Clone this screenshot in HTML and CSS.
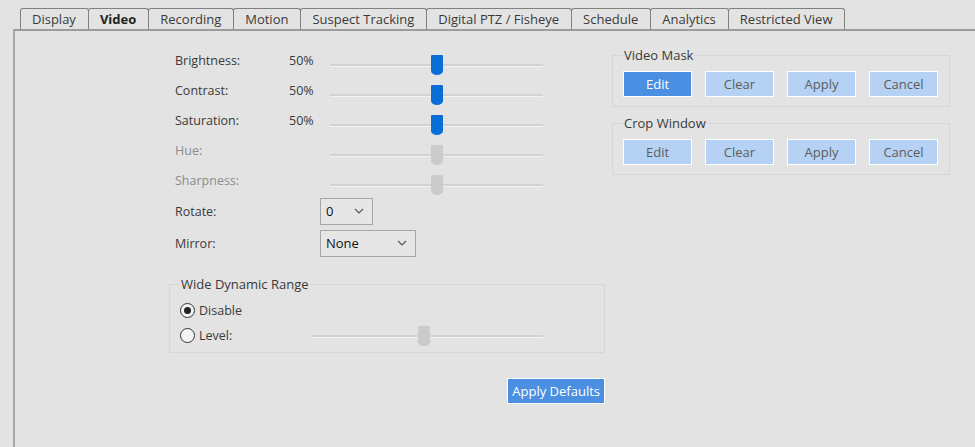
FILE: index.html
```html
<!DOCTYPE html>
<html lang="en">
<head>
    <title>Camera Settings - Video</title>
    <link rel="stylesheet" href="styles.css">
</head>
<body>
    <div class="tabs">
        <div class="tab">Display</div>
        <div class="tab active">Video</div>
        <div class="tab">Recording</div>
        <div class="tab">Motion</div>
        <div class="tab">Suspect Tracking</div>
        <div class="tab">Digital PTZ / Fisheye</div>
        <div class="tab">Schedule</div>
        <div class="tab">Analytics</div>
        <div class="tab">Restricted View</div>
    </div>

    <div class="panel">
        <div class="left">
            <div class="slider-row">
                <span>Brightness:</span>
                <span>50%</span>
                <div class="slider"><div class="thumb"></div></div>
            </div>
            <div class="slider-row">
                <span>Contrast:</span>
                <span>50%</span>
                <div class="slider"><div class="thumb"></div></div>
            </div>
            <div class="slider-row">
                <span>Saturation:</span>
                <span>50%</span>
                <div class="slider"><div class="thumb"></div></div>
            </div>
            <div class="slider-row disabled">
                <span>Hue:</span>
                <span></span>
                <div class="slider"><div class="thumb"></div></div>
            </div>
            <div class="slider-row disabled">
                <span>Sharpness:</span>
                <span></span>
                <div class="slider"><div class="thumb"></div></div>
            </div>

            <div class="select-row">
                <span>Rotate:</span>
                <div class="select select-small">
                    <span>0</span>
                    <svg width="10" height="6" viewBox="0 0 10 6"><polyline points="1,1 5,5 9,1" fill="none" stroke="#555" stroke-width="1.1"/></svg>
                </div>
            </div>
            <div class="select-row">
                <span>Mirror:</span>
                <div class="select select-wide">
                    <span>None</span>
                    <svg width="10" height="6" viewBox="0 0 10 6"><polyline points="1,1 5,5 9,1" fill="none" stroke="#555" stroke-width="1.1"/></svg>
                </div>
            </div>

            <fieldset class="group wdr">
                <legend>Wide Dynamic Range</legend>
                <div class="radio-row">
                    <span class="radio checked"></span>
                    <span>Disable</span>
                </div>
                <div class="radio-row level">
                    <div class="radio-label">
                        <span class="radio"></span>
                        <span>Level:</span>
                    </div>
                    <div class="slider off"><div class="thumb"></div></div>
                </div>
            </fieldset>

            <div class="actions">
                <button class="btn primary">Apply Defaults</button>
            </div>
        </div>

        <div class="right">
            <fieldset class="group">
                <legend>Video Mask</legend>
                <div class="btn-row">
                    <button class="btn primary">Edit</button>
                    <button class="btn">Clear</button>
                    <button class="btn">Apply</button>
                    <button class="btn">Cancel</button>
                </div>
            </fieldset>
            <fieldset class="group">
                <legend>Crop Window</legend>
                <div class="btn-row">
                    <button class="btn">Edit</button>
                    <button class="btn">Clear</button>
                    <button class="btn">Apply</button>
                    <button class="btn">Cancel</button>
                </div>
            </fieldset>
        </div>
    </div>
</body>
</html>
```

FILE: styles.css
```css
body {
    font-family: "Open Sans", "Noto Sans", sans-serif;
    font-size: 12.5px;
    color: #3a3a3a;
    background-color: #e3e3e3;
    margin: 0;
    padding: 0;
    overflow: hidden;
}

.tabs {
    display: flex;
    padding: 8px 0 0 20px;
    height: 21px;
}

.tab {
    height: 20px;
    line-height: 20px;
    font-size: 13px;
    padding: 0 12px 0 11px;
    border: 1px solid #808080;
    border-bottom: none;
    border-radius: 3px 3px 0 0;
    margin-right: -1px;
    color: #3a3a3a;
}

.tab.active {
    font-weight: bold;
    color: #222;
}

.panel {
    margin-left: 13px;
    height: 418px;
    border-top: 2px solid #9c9c9c;
    border-left: 2px solid #a8a8a8;
    display: flex;
    align-items: flex-start;
}

.left {
    width: 436px;
    margin-left: 154px;
    padding-top: 14px;
}

.slider-row {
    display: grid;
    grid-template-columns: 114px 41px 213px;
    align-items: center;
    height: 30px;
    padding-left: 6px;
}

.slider-row:last-of-type {
    height: 32px;
}

.slider-row.disabled {
    color: #8c8c8c;
}

.slider {
    position: relative;
    height: 20px;
    margin-top: 10px;
}

.slider::before {
    content: "";
    position: absolute;
    left: 0;
    right: 0;
    top: 9px;
    height: 2px;
    background: #d2d2d2;
    border-bottom: 1px solid #f2f2f2;
}

.thumb {
    position: absolute;
    left: calc(50% - 6px);
    top: 0;
    width: 12px;
    height: 20px;
    background: #0a6ed6;
    border-radius: 1px 1px 6px 6px / 1px 1px 4px 4px;
}

.disabled .thumb,
.off .thumb {
    background: #cbcbcb;
}

.off .thumb {
    left: calc(50% - 10px);
}

.select-row {
    display: flex;
    align-items: center;
    height: 32px;
    padding-left: 6px;
}

.select-row > span {
    width: 145px;
}

.select-row:first-of-type {
    margin-top: 2px;
}

.select {
    display: flex;
    align-items: center;
    justify-content: space-between;
    height: 27px;
    padding: 0 8px 0 5px;
    border: 1px solid #a6a6a6;
    background: #e6e6e6;
    color: #111;
    font-size: 13px;
    box-sizing: border-box;
}

.select-small {
    width: 53px;
}

.select-wide {
    width: 96px;
}

.group {
    margin: 0;
    border: 1px solid #d6d6d6;
    padding: 0 10px 9px 10px;
}

.group legend {
    padding: 0 1px;
    font-size: 13px;
    color: #3a3a3a;
}

.wdr {
    margin-top: 16px;
    padding-bottom: 4px;
}

.radio-row {
    display: flex;
    align-items: center;
    height: 25px;
}

.radio-row:first-of-type {
    margin-top: 5px;
}

.radio-label {
    display: flex;
    align-items: center;
    width: 132px;
}

.radio-row .slider {
    width: 231px;
    margin-top: 0;
}

.radio {
    width: 13px;
    height: 13px;
    border: 1.5px solid #333;
    border-radius: 50%;
    background: #f4f4f4;
    margin-right: 4px;
    position: relative;
}

.radio.checked::after {
    content: "";
    position: absolute;
    left: 3px;
    top: 3px;
    width: 7px;
    height: 7px;
    border-radius: 50%;
    background: #222;
}

.actions {
    display: flex;
    justify-content: flex-end;
    margin-top: 25px;
}

.btn {
    font-family: inherit;
    font-size: 13px;
    height: 26px;
    padding: 0 4px;
    border: 1px solid #fff;
    background: #b5d2f4;
    color: #5c5c5c;
}

.btn.primary {
    background: #4a8fe1;
    color: #fff;
}

.right {
    width: 338px;
    margin-left: 7px;
    padding-top: 15px;
}

.right .group + .group {
    margin-top: 7px;
}

.btn-row {
    display: flex;
    gap: 13px;
    margin-top: 7px;
}

.btn-row .btn {
    width: 69px;
}
```
